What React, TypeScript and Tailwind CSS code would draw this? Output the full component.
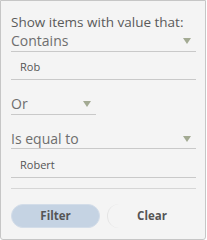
import React from 'react';

const Caret = () => (
  <svg width="8" height="6" viewBox="0 0 8 6" className="shrink-0">
    <polygon points="0,0 8,0 4,6" fill="#a3aa93" />
  </svg>
);

const Select: React.FC<{ label: string; className?: string }> = ({ label, className }) => (
  <div className={`flex items-center justify-between border-b border-[#c9c9c9] pr-[5px] ${className ?? ''}`}>
    <span className="text-[14px] leading-[19px] text-[#6e6e6e]">{label}</span>
    <Caret />
  </div>
);

const Input: React.FC<{ value: string }> = ({ value }) => (
  <div className="border-b border-[#c9c9c9] pl-[9px] pt-[7px] pb-[5px] text-[11px] leading-[15px] text-[#555]">
    {value}
  </div>
);

export default function App() {
  return (
    <div
      className="w-[206px] h-[240px] border border-[#c6c6c6] bg-[#f4f4f4] rounded-b-[3px] pl-[10px] pr-[9px] pt-[12px] flex flex-col"
      style={{ fontFamily: '"Open Sans", sans-serif' }}
    >
      <div className="text-[13.5px] leading-[18px] text-[#5a5a5a] whitespace-nowrap">Show items with value that:</div>
      <Select label="Contains" className="pb-[1px]" />
      <Input value="Rob" />
      <Select label="Or" className="w-[85px] mt-[14px] pb-[1px]" />
      <Select label="Is equal to" className="mt-[14px]" />
      <div className="border-b border-[#c9c9c9] pl-[9px] pt-[8px] pb-[5px] text-[11px] leading-[15px] text-[#555]">
        Robert
      </div>
      <div className="mt-[10px] border-b border-[#d6d6d6]" />
      <div className="flex gap-[7px] mt-[15px]">
        <button className="w-[89px] h-[24px] rounded-full bg-[#c5d3e3] border border-[#d3dde9] text-[11.5px] font-bold text-[#555]">
          Filter
        </button>
        <button className="w-[89px] h-[24px] rounded-full border-l border-[#e4e4e4] text-[11.5px] font-bold text-[#555]">
          Clear
        </button>
      </div>
    </div>
  );
}
